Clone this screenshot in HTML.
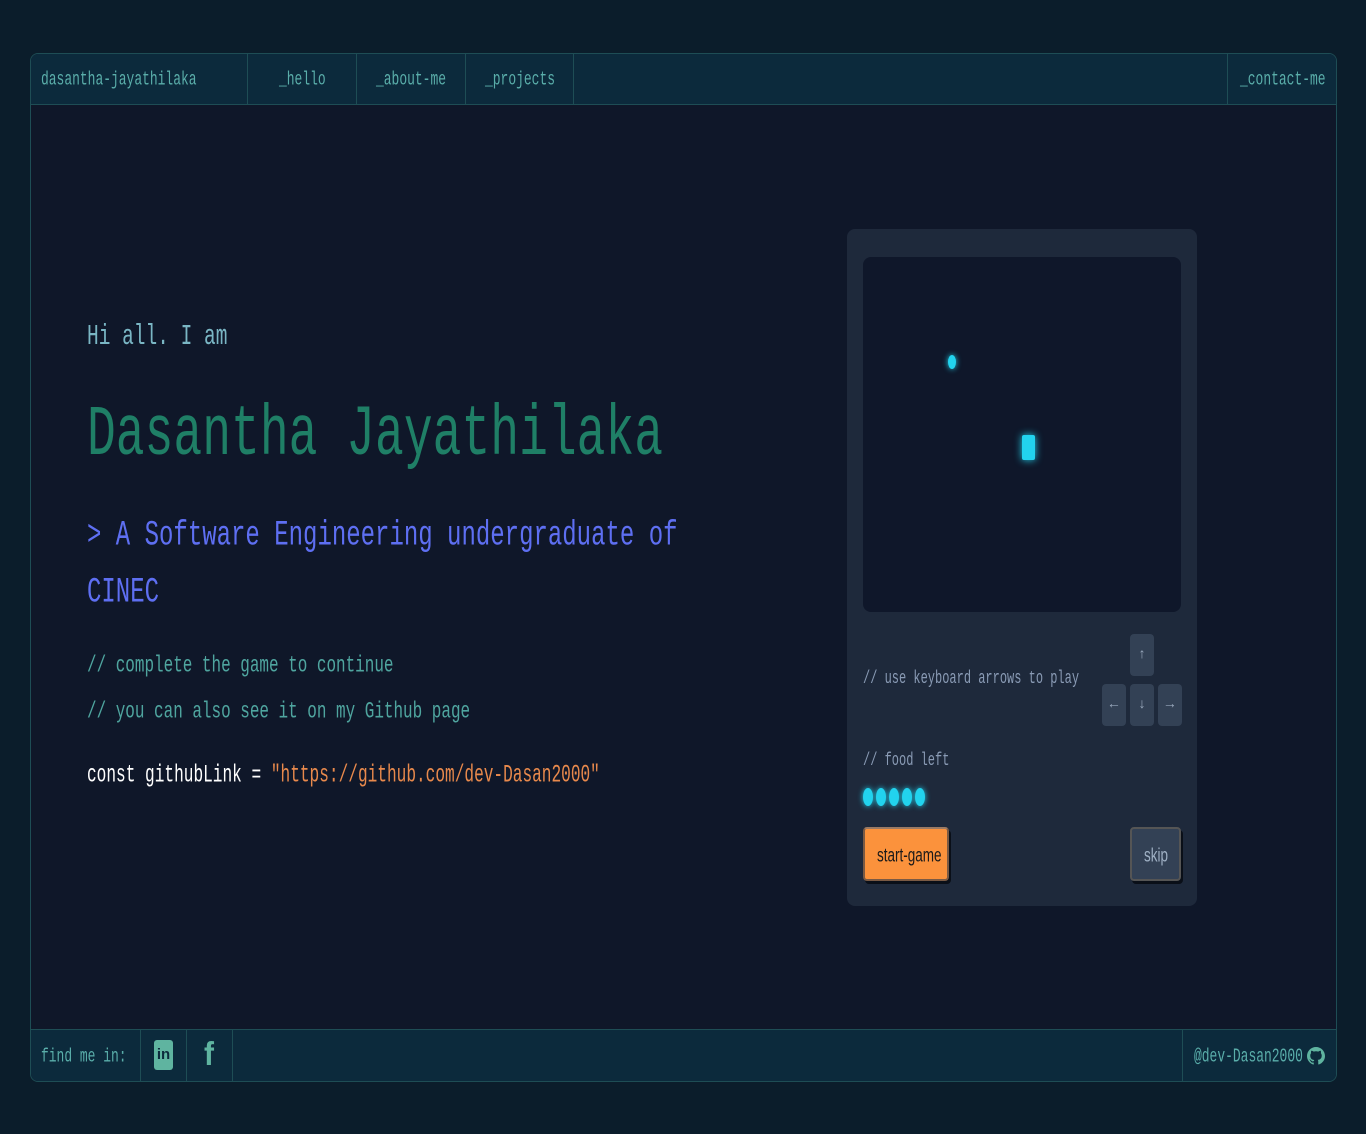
<!DOCTYPE html>
<html><head><meta charset="utf-8"><style>
*{margin:0;padding:0;box-sizing:border-box}
body{width:1366px;height:1134px;background:#0b1d2b;position:relative;overflow:hidden;font-family:"Liberation Mono",monospace}
.a{position:absolute}
.m{position:absolute;white-space:nowrap;transform:scaleX(.75);transform-origin:left top;line-height:1}
#frame{left:30px;top:53px;width:1307px;height:1029px;border:1px solid #1e4d55;border-radius:8px;background:#0f1729;overflow:hidden}
#nav{left:0;top:0;width:100%;height:51px;background:#0c2a3c;border-bottom:1px solid #1e4d55}
#foot{left:0;bottom:0;width:100%;height:52px;background:#0c2a3c;border-top:1px solid #1e4d55}
.sep{position:absolute;top:0;width:1px;height:100%;background:#1e4d55}
.nt{color:#5aaeaa;font-size:18px;transform:scaleX(.72) scaleY(1.1)}
</style></head><body>
<div id="frame" class="a">
 <div id="nav" class="a">
  <div class="m nt" style="left:10px;top:16px">dasantha-jayathilaka</div>
  <div class="sep" style="left:216px"></div>
  <div class="m nt" style="left:248px;top:16px">_hello</div>
  <div class="sep" style="left:325px"></div>
  <div class="m nt" style="left:345px;top:16px">_about-me</div>
  <div class="sep" style="left:434px"></div>
  <div class="m nt" style="left:454px;top:16px">_projects</div>
  <div class="sep" style="left:542px"></div>
  <div class="sep" style="left:1196px"></div>
  <div class="m nt" style="left:1209px;top:16px">_contact-me</div>
 </div>
 <div class="m" style="left:56px;top:268px;font-size:26px;color:#7ab6c4;transform:scaleX(.75) scaleY(1.1)">Hi all. I am</div>
 <div class="m" style="left:56px;top:346px;font-size:64px;color:#1f7f66;transform:scaleX(.75) scaleY(1.12)">Dasantha Jayathilaka</div>
 <div class="m" style="left:56px;top:453px;font-size:32px;color:#5e6ff2;line-height:52px;transform:scaleX(.75) scaleY(1.1)">&gt; A Software Engineering undergraduate of<br>CINEC</div>
 <div class="m" style="left:56px;top:590px;font-size:21px;color:#4fa59f;line-height:42px;transform:scaleX(.76) scaleY(1.1)">// complete the game to continue<br>// you can also see it on my Github page</div>
 <div class="m" style="left:56px;top:710px;font-size:21.5px;color:#fff;transform:scaleX(.75) scaleY(1.15)">const githubLink = <span style="color:#e8894c">"https://github.com/dev-Dasan2000"</span></div>

 <div class="a" style="left:816px;top:175px;width:350px;height:677px;background:#1e293b;border-radius:8px">
  <div class="a" style="left:16px;top:28px;width:318px;height:355px;background:#0f172a;border-radius:8px">
   <div class="a" style="left:85px;top:98px;width:8px;height:14px;border-radius:50%;background:#22d3ee;box-shadow:0 0 6px #22d3ee"></div>
   <div class="a" style="left:159px;top:178px;width:13px;height:25px;border-radius:2px;background:#22d3ee;box-shadow:0 0 8px #22d3ee"></div>
  </div>
  <div class="m" style="left:16px;top:440px;font-size:16px;color:#8a9bb5;transform:scaleX(.75) scaleY(1.15)">// use keyboard arrows to play</div>
  <div class="a" style="left:283px;top:405px;width:24px;height:42px;background:#334155;border-radius:4px;color:#9aa9bd;font-size:14px;text-align:center;line-height:42px">↑</div>
  <div class="a" style="left:255px;top:455px;width:24px;height:42px;background:#334155;border-radius:4px;color:#9aa9bd;font-size:14px;text-align:center;line-height:42px">←</div>
  <div class="a" style="left:283px;top:455px;width:24px;height:42px;background:#334155;border-radius:4px;color:#9aa9bd;font-size:14px;text-align:center;line-height:42px">↓</div>
  <div class="a" style="left:311px;top:455px;width:24px;height:42px;background:#334155;border-radius:4px;color:#9aa9bd;font-size:14px;text-align:center;line-height:42px">→</div>
  <div class="m" style="left:16px;top:522px;font-size:16px;color:#8a9bb5;transform:scaleX(.75) scaleY(1.15)">// food left</div>
  <div class="a" style="left:16px;display:flex;gap:3px;top:559px">
   <div style="width:10px;height:18px;border-radius:50%;background:#22d3ee;box-shadow:0 0 6px #22d3ee"></div>
   <div style="width:10px;height:18px;border-radius:50%;background:#22d3ee;box-shadow:0 0 6px #22d3ee"></div>
   <div style="width:10px;height:18px;border-radius:50%;background:#22d3ee;box-shadow:0 0 6px #22d3ee"></div>
   <div style="width:10px;height:18px;border-radius:50%;background:#22d3ee;box-shadow:0 0 6px #22d3ee"></div>
   <div style="width:10px;height:18px;border-radius:50%;background:#22d3ee;box-shadow:0 0 6px #22d3ee"></div>
  </div>
  <div class="a" style="left:16px;top:598px;width:86px;height:54px;background:#fb923c;border-radius:4px;border:2px solid #7a5a44;border-top-color:#9a7a64;box-shadow:2px 3px 0 #0a0f18"><div class="m" style="left:12px;top:16px;font-family:'Liberation Sans',sans-serif;font-size:18px;color:#1a1a1a;transform:scaleX(.75) scaleY(1.1)">start-game</div></div>
  <div class="a" style="left:283px;top:598px;width:51px;height:54px;background:#334155;border-radius:4px;border:2px solid #555;box-shadow:2px 3px 0 #0a0f18"><div class="m" style="left:12px;top:16px;font-family:'Liberation Sans',sans-serif;font-size:18px;color:#9fb0c4;transform:scaleX(.75) scaleY(1.1)">skip</div></div>
 </div>

 <div id="foot" class="a">
  <div class="m nt" style="left:10px;top:17px">find me in:</div>
  <div class="sep" style="left:109px"></div>
  <div class="a" style="left:123px;top:10px;width:19px;height:30px;background:#5fb4a0;border-radius:3px;color:#0c2a3c;font-family:'Liberation Sans',sans-serif;font-weight:bold;font-size:15px;text-align:center;line-height:30px">in</div>
  <div class="sep" style="left:155px"></div>
  <div class="a" style="left:173px;top:8px;color:#5fb4a0;font-family:'Liberation Sans',sans-serif;font-weight:bold;font-size:30px;line-height:34px;transform:scaleY(1.1)">f</div>
  <div class="sep" style="left:201px"></div>
  <div class="sep" style="left:1151px"></div>
  <div class="m nt" style="left:1163px;top:17px">@dev-Dasan2000</div>
  <svg class="a" style="left:1276px;top:14px" width="18" height="24" viewBox="0 0 16 16"><path fill="#5fb4a0" d="M8 0C3.6 0 0 3.6 0 8c0 3.5 2.3 6.5 5.5 7.6.4.1.5-.2.5-.4v-1.4c-2.2.5-2.7-1-2.7-1-.4-.9-.9-1.2-.9-1.2-.7-.5.1-.5.1-.5.8.1 1.2.8 1.2.8.7 1.2 1.9.9 2.3.7.1-.5.3-.9.5-1.1-1.8-.2-3.6-.9-3.6-4 0-.9.3-1.6.8-2.1-.1-.2-.4-1 .1-2.1 0 0 .7-.2 2.2.8.6-.2 1.3-.3 2-.3s1.4.1 2 .3c1.5-1 2.2-.8 2.2-.8.4 1.1.2 1.9.1 2.1.5.6.8 1.3.8 2.1 0 3.1-1.9 3.7-3.6 3.9.3.3.5.8.5 1.5v2.2c0 .2.1.5.6.4C13.7 14.5 16 11.5 16 8c0-4.4-3.6-8-8-8z"/></svg>
 </div>
</div>
</body></html>
